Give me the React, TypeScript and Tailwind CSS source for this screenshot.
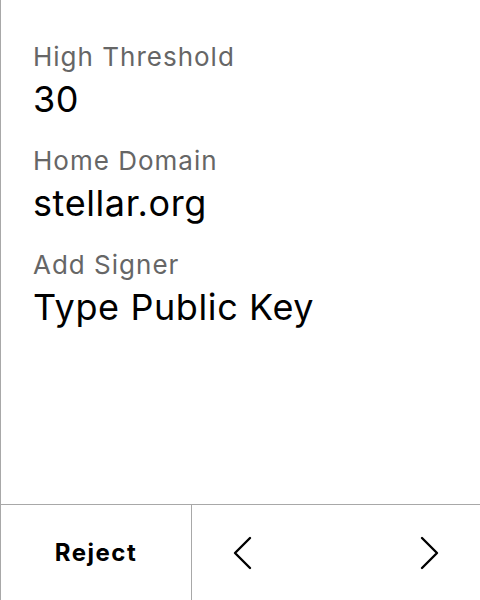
import React from "react";

const rows = [
  { label: "High Threshold", value: "30" },
  { label: "Home Domain", value: "stellar.org" },
  { label: "Add Signer", value: "Type Public Key" },
];

function Chevron({ dir }: { dir: "left" | "right" }) {
  return (
    <svg width="20" height="34" viewBox="0 0 20 34" fill="none">
      <polyline
        points={dir === "left" ? "18,2 3,17 18,32" : "2,2 17,17 2,32"}
        stroke="#000"
        strokeWidth="2.4"
        strokeLinecap="round"
        strokeLinejoin="round"
      />
    </svg>
  );
}

export default function App() {
  return (
    <div
      className="w-[480px] h-[600px] bg-white flex flex-col border-l border-[#a8a8a8] text-black"
      style={{ fontFamily: "Inter, 'Noto Sans', sans-serif" }}
    >
      <div className="flex-1 flex flex-col pl-[32px] pt-[41px] gap-[26px]">
        {rows.map((r) => (
          <div key={r.label} className="flex flex-col">
            <div className="text-[26px] leading-[32px] tracking-[1px] text-[#666666]">{r.label}</div>
            <div className="mt-[6px] text-[36px] leading-[40px] tracking-[0.6px]">{r.value}</div>
          </div>
        ))}
      </div>
      <div className="h-[96px] flex border-t border-[#a8a8a8]">
        <div className="w-[191px] flex items-center justify-center border-r border-[#a8a8a8] text-[24px] font-bold tracking-[1.5px]">
          Reject
        </div>
        <div className="flex-1 flex items-center justify-between px-[40px]">
          <Chevron dir="left" />
          <Chevron dir="right" />
        </div>
      </div>
    </div>
  );
}
